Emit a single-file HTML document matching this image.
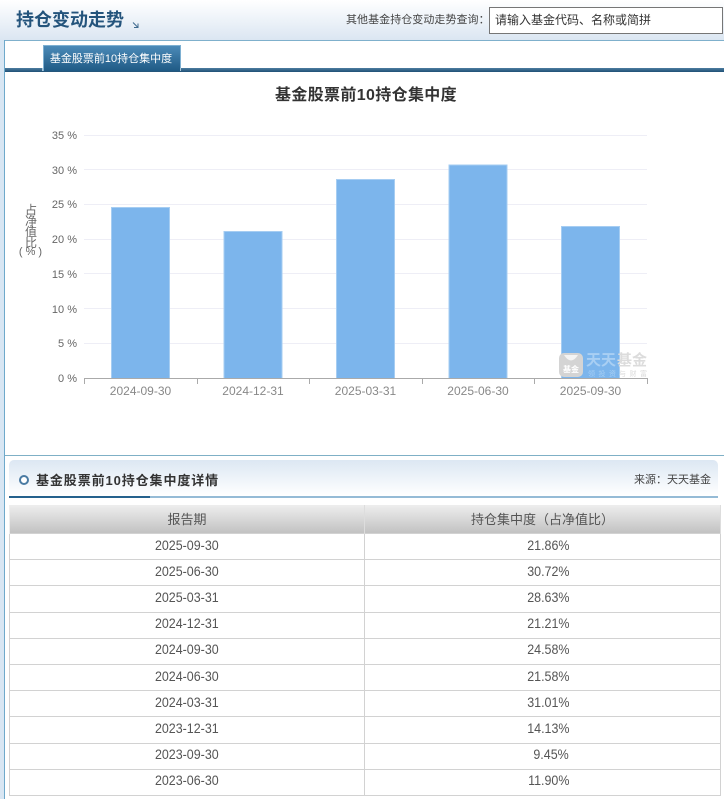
<!DOCTYPE html>
<html lang="zh-CN"><head><meta charset="utf-8"><title>持仓变动走势</title>
<style>
html,body{margin:0;padding:0;background:#fff}
body{width:724px;height:799px;position:relative;overflow:hidden;font-family:"Liberation Sans","Noto Sans CJK SC","WenQuanYi Zen Hei",sans-serif;color:#333}
.a{position:absolute;white-space:nowrap}
table{position:absolute;left:9px;top:505px;width:711px;border-collapse:collapse;table-layout:fixed;font-size:14px;color:#555}
th{height:26px;padding:0 0 2px;font-weight:normal;font-size:13px;background:linear-gradient(#eeeeee,#c2c2c2);border-left:1px solid #eee;border-right:1px solid #ddd}
td{height:21.2px;padding:0 0 4px;text-align:center;border:1px solid #d2d2d2;line-height:16px}
td span{display:inline-block;transform:scaleX(.89);transform-origin:50% 50%}
td+td{text-align:right;padding-right:151px}
td+td span{transform-origin:100% 50%}
</style></head><body>
<div class="a" style="left:0;top:0;width:724px;height:40px;background:linear-gradient(#ffffff,#dbe6f2)"></div>
<div class="a" style="left:0;top:40px;width:4px;height:759px;background:#d8e6f3"></div>
<div class="a" style="left:4px;top:40px;width:720px;height:1px;background:#7fb0cc"></div>
<div class="a" style="left:4px;top:40px;width:1px;height:759px;background:#6ea9cb"></div>
<div class="a" style="left:16px;top:8px;font-size:18px;font-weight:bold;color:#24547c;line-height:25px">持仓变动走势</div>
<svg class="a" style="left:132px;top:21px" width="8" height="8"><path d="M1 1.500L6 6.500M6 2.500V6.500H2" fill="none" stroke="#3f6a8e" stroke-width="1"/></svg>
<div class="a" style="left:346px;top:13px;font-size:11px;line-height:15px;color:#444;letter-spacing:.05px">其他基金持仓变动走势查询：</div>
<div class="a" style="left:489px;top:7px;width:232px;height:25px;border:1px solid #767676;background:#fff;font-size:12px;line-height:25px;color:#333;text-indent:5px">请输入基金代码、名称或简拼</div>

<div class="a" style="left:5px;top:68px;width:719px;height:4px;background:linear-gradient(#4d7da0,#1f5076)"></div>
<div class="a" style="left:43px;top:45px;width:136px;height:25px;border:1px solid #7eb0d2;border-bottom:0;background:linear-gradient(#4b8ab8,#1f5a85);color:#fff;font-size:11px;line-height:26px;text-align:center;text-indent:-2px">基金股票前10持仓集中度</div>
<div class="a" style="left:42px;top:68px;width:1px;height:3px;background:#a9c6da"></div>
<div class="a" style="left:180px;top:68px;width:1px;height:3px;background:#a9c6da"></div>

<svg class="a" style="left:0;top:75px" width="724" height="345" viewBox="0 75 724 345" font-family="Liberation Sans, Noto Sans CJK SC, sans-serif">
<text x="366" y="100" font-size="16" font-weight="bold" fill="#333" text-anchor="middle" letter-spacing=".35">基金股票前10持仓集中度</text>
<g stroke="#eeeef6" stroke-width="1">
<path d="M84 135.500H647M84 169.500H647M84 204.500H647M84 239.500H647M84 273.500H647M84 308.500H647M84 343.500H647"/>
</g>
<g fill="#7cb5ec" stroke="#a6cdf2" stroke-width="1">
<rect x="111.500" y="207.500" width="58" height="171"/>
<rect x="224" y="231.500" width="58" height="147"/>
<rect x="336.500" y="179.500" width="58" height="199"/>
<rect x="449" y="165" width="58" height="213.500"/>
<rect x="561.500" y="226.500" width="58" height="152"/>
</g>
<path d="M84.500 384V378.500H647.500V384M197.500 378V384M309.500 378V384M422.500 378V384M534.500 378V384" fill="none" stroke="#aaaaaa" stroke-width="1"/>
<g font-size="11" fill="#666" text-anchor="end">
<text x="77" y="139">35 %</text><text x="77" y="174">30 %</text><text x="77" y="208">25 %</text><text x="77" y="243">20 %</text><text x="77" y="278">15 %</text><text x="77" y="313">10 %</text><text x="77" y="347">5 %</text><text x="77" y="382">0 %</text>
</g>
<g font-size="12" fill="#888" text-anchor="middle">
<text x="140.500" y="395">2024-09-30</text><text x="253" y="395">2024-12-31</text><text x="365.500" y="395">2025-03-31</text><text x="478" y="395">2025-06-30</text><text x="590.500" y="395">2025-09-30</text>
</g>
<g font-size="12" fill="#666" text-anchor="middle">
<text x="31" y="214">占</text><text x="31" y="225">净</text><text x="31" y="236">值</text><text x="31" y="247">比</text>
<text x="30.500" y="255" font-size="11">( % )</text>
</g>
<g>
<rect x="559" y="353" width="24" height="24" rx="5" fill="#d4d4d4"/>
<path d="M564 355Q571 366 578 355Z" fill="#f4f4f4"/>
<text x="571" y="372" font-size="8" font-weight="bold" fill="#fff" text-anchor="middle">基金</text>
<g font-size="15" font-weight="bold" font-family="Noto Sans CJK SC, sans-serif">
<text x="586" y="365" fill="#a9cff3">天天</text>
<text x="617" y="365" fill="#dcdcdc">基金</text>
</g>
<g font-size="7" letter-spacing="3.500">
<text x="588" y="376" fill="#a9cff3">领投资</text>
<text x="619" y="376" fill="#dadada">与财富</text>
</g>
</g>
</svg>

<div class="a" style="left:5px;top:455px;width:719px;height:1px;background:#7fb0c6"></div>
<div class="a" style="left:9px;top:460px;width:709px;height:36px;border-radius:5px 5px 0 0;background:linear-gradient(#dce7f3,#ffffff)"></div>
<div class="a" style="left:9px;top:496px;width:709px;height:2px;background:#95bbd6"></div>
<div class="a" style="left:9px;top:496px;width:141px;height:2px;background:#25618d"></div>
<div class="a" style="left:19px;top:475px;width:6px;height:6px;border:2px solid #4a7ba3;border-radius:50%;background:#fff"></div>
<div class="a" style="left:36px;top:472px;font-size:13px;font-weight:bold;line-height:18px;color:#333;letter-spacing:.9px">基金股票前10持仓集中度详情</div>
<div class="a" style="left:634px;top:473px;font-size:11px;line-height:15px;color:#444">来源：天天基金</div>

<table>
<colgroup><col style="width:355px"><col style="width:356px"></colgroup>
<tr><th>报告期</th><th>持仓集中度（占净值比）</th></tr>
<tr><td><span>2025-09-30</span></td><td><span>21.86%</span></td></tr>
<tr><td><span>2025-06-30</span></td><td><span>30.72%</span></td></tr>
<tr><td><span>2025-03-31</span></td><td><span>28.63%</span></td></tr>
<tr><td><span>2024-12-31</span></td><td><span>21.21%</span></td></tr>
<tr><td><span>2024-09-30</span></td><td><span>24.58%</span></td></tr>
<tr><td><span>2024-06-30</span></td><td><span>21.58%</span></td></tr>
<tr><td><span>2024-03-31</span></td><td><span>31.01%</span></td></tr>
<tr><td><span>2023-12-31</span></td><td><span>14.13%</span></td></tr>
<tr><td><span>2023-09-30</span></td><td><span>9.45%</span></td></tr>
<tr><td><span>2023-06-30</span></td><td><span>11.90%</span></td></tr>
</table>
</body></html>
